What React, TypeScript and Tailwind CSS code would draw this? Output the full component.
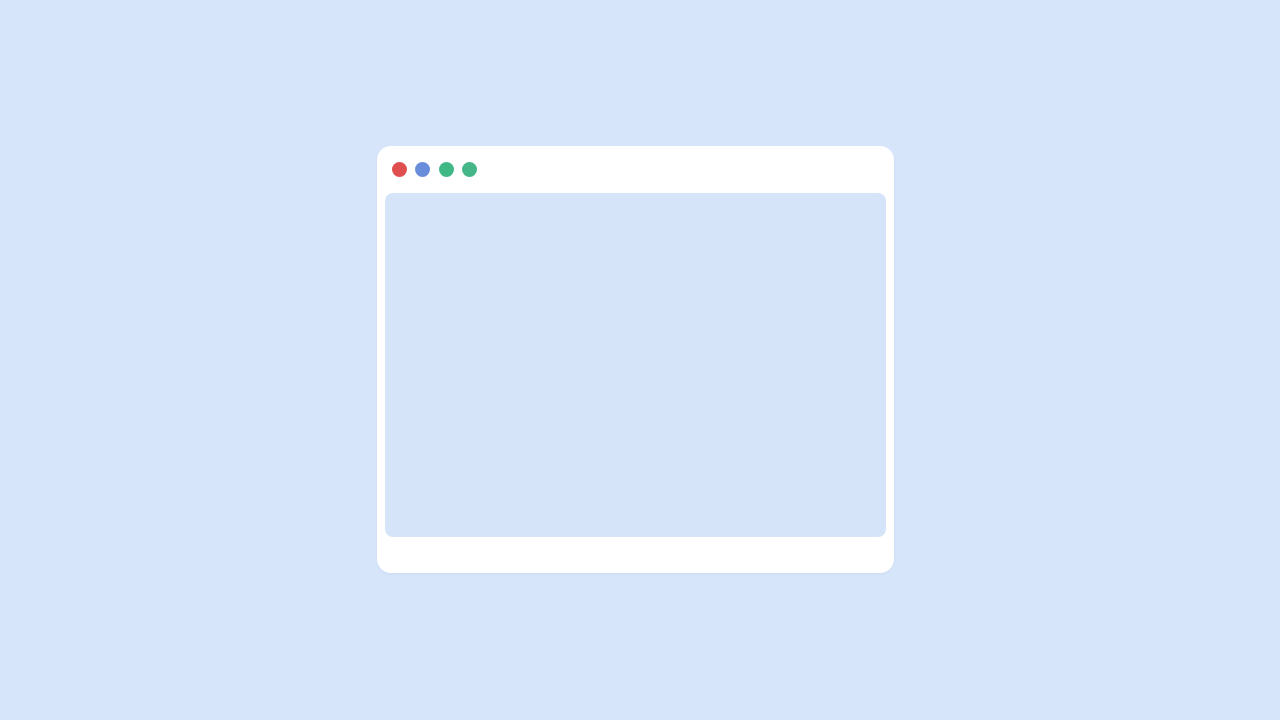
export default function App() {
  const dots = ["bg-[#e04f4f]", "bg-[#6a8ddb]", "bg-[#3fb886]", "bg-[#44b688]"];

  return (
    <div className="flex h-[720px] w-full items-center justify-center bg-[#d6e5f9]">
      {/* Browser window */}
      <div className="mr-[9px] mb-[2px] flex h-[427px] w-[517px] flex-col rounded-[14px] bg-white shadow-[0_1px_2px_rgba(120,150,200,0.12)]">
        <div className="flex h-[47px] items-center gap-[8.5px] pl-[14.5px]">
          {dots.map((c, i) => (
            <span key={i} className={`h-[15px] w-[15px] rounded-full ${c}`} />
          ))}
        </div>
        <div className="mx-[8px] h-[344px] rounded-[8px] bg-[#d5e4f9]" />
      </div>
    </div>
  );
}
